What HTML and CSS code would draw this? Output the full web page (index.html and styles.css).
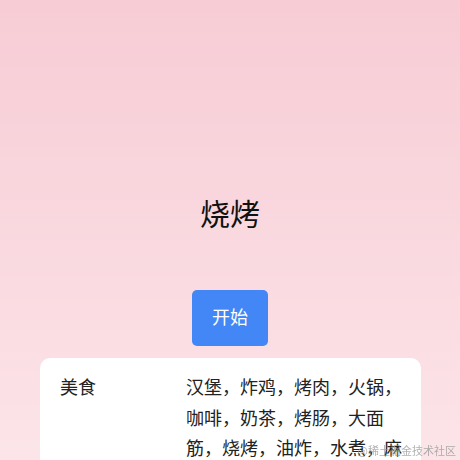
FILE: index.html
```html
<!DOCTYPE html>
<html lang="zh-CN">
<head>
<meta charset="utf-8">
<title>今天吃什么</title>
<link rel="stylesheet" href="styles.css">
</head>
<body>
<main class="page">
  <h1 class="result">烧烤</h1>
  <button class="start-btn" type="button">开始</button>
  <section class="card">
    <div class="row">
      <div class="label">美食</div>
      <div class="value">汉堡，炸鸡，烤肉，火锅，咖啡，奶茶，烤肠，大面筋，烧烤，油炸，水煮，麻辣烫，螺蛳粉，酸辣粉</div>
    </div>
  </section>
</main>
<div class="watermark">@稀土掘金技术社区</div>
</body>
</html>
```
FILE: styles.css
```css
html, body {
  margin: 0;
  padding: 0;
}

body {
  min-height: 460px;
  background: linear-gradient(180deg, #f7ccd5 0%, #fbe0e5 75%, #fce8eb 100%);
  font-family: "Noto Sans CJK SC", "Noto Sans", sans-serif;
  color: #222;
  overflow: hidden;
}

.page {
  display: flex;
  flex-direction: column;
  align-items: center;
  padding-top: 192px;
}

.result {
  margin: 0;
  font-size: 30px;
  line-height: 40px;
  font-weight: 400;
  color: #111;
}

.start-btn {
  margin-top: 58px;
  width: 76px;
  height: 56px;
  border: none;
  border-radius: 5px;
  background: #4287f5;
  color: #fff;
  font-family: inherit;
  font-size: 18px;
  padding: 0 0 4px;
}

.card {
  margin-top: 12px;
  width: 381px;
  box-sizing: border-box;
  background: #fff;
  border-radius: 10px;
  padding: 13px 16px 13px 20px;
  align-self: flex-start;
  margin-left: 40px;
}

.row {
  display: grid;
  grid-template-columns: 126px 1fr;
  font-size: 18px;
  line-height: 30.5px;
  color: #222;
}

.watermark {
  position: fixed;
  right: 4px;
  bottom: 2px;
  font-size: 11px;
  color: rgba(150, 150, 150, 0.75);
  font-family: "Noto Sans CJK SC", sans-serif;
}
```
